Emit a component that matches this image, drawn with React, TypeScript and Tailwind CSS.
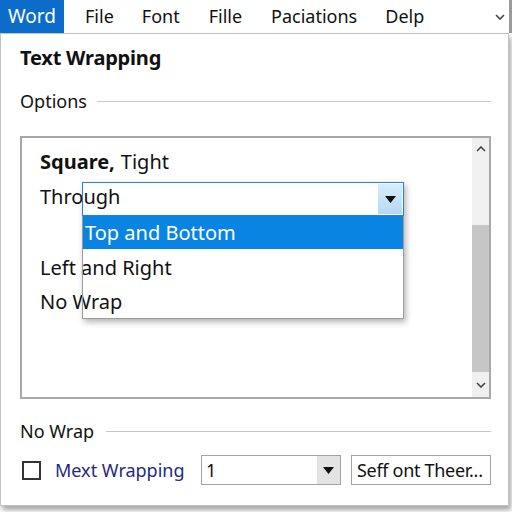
import React from "react";

const font = { fontFamily: "'Noto Sans', 'Open Sans', Arial, sans-serif" };

function Tri({ className = "" }: { className?: string }) {
  return (
    <svg width="11" height="7" viewBox="0 0 11 7" className={className}>
      <path d="M0 0 L11 0 L5.5 7 Z" fill="#111" />
    </svg>
  );
}

function Chevron({ up }: { up?: boolean }) {
  return (
    <svg width="10" height="6" viewBox="0 0 10 6">
      <path d={up ? "M1 5 L5 1 L9 5" : "M1 1 L5 5 L9 1"} stroke="#444" strokeWidth="1.6" fill="none" />
    </svg>
  );
}

export default function App() {
  const menu = [
    { label: "File", ml: "ml-[21px]" },
    { label: "Font", ml: "ml-[28px]" },
    { label: "Fille", ml: "ml-[29px]" },
    { label: "Paciations", ml: "ml-[29px]" },
    { label: "Delp", ml: "ml-[28px]" },
  ];

  return (
    <div className="w-[512px] h-[512px] bg-white overflow-hidden text-[#111]" style={font}>
      {/* menu bar */}
      <div className="flex items-center h-[33px] text-[18px] border-r-[3px] border-[#9a9a9a]">
        <div className="h-full w-[64px] bg-[#0b6dc9] text-white text-[19px] flex items-center justify-center">Word</div>
        {menu.map((m) => (
          <span key={m.label} className={m.ml}>{m.label}</span>
        ))}
        <div className="ml-auto mr-[4px] flex items-center">
          <Chevron />
        </div>
      </div>

      {/* dialog panel */}
      <div className="w-[509px] h-[473px] border border-[#c2c2c2] bg-white shadow-[2px_4px_5px_rgba(0,0,0,0.35)] flex flex-col pl-[19px] pr-[17px]">
        <div className="mt-[11px] h-[26px] flex items-center text-[20px] font-bold tracking-[-0.2px]">Text Wrapping</div>

        <div className="mt-[18px] h-[24px] flex items-center gap-[10px] text-[18px]">
          <span>Options</span>
          <div className="flex-1 h-px bg-[#c8c8c8]" />
        </div>

        {/* listbox */}
        <div className="relative mt-[23px] w-[471px] h-[263px] border-2 border-[#a8a8a8] flex">
          <div className="flex-1 flex flex-col pt-[6px] pl-[18px] text-[20px]">
            <div className="h-[35px] flex items-center">
              <span className="font-bold">Square,</span>
              <span className="ml-[6px]">Tight</span>
            </div>
            <div className="h-[36px] flex items-center">Through</div>
            <div className="h-[35px]" />
            <div className="h-[35px] flex items-center">Left and Right</div>
            <div className="h-[33px] flex items-center">No Wrap</div>
          </div>

          {/* scrollbar */}
          <div className="w-[17px] h-full bg-[#f0f0f0] flex flex-col items-center">
            <div className="h-[22px] flex items-center">
              <Chevron up />
            </div>
            <div className="mt-[65px] w-full h-[147px] bg-[#c6c6c6]" />
            <div className="flex-1 flex items-center">
              <Chevron />
            </div>
          </div>

          {/* dropdown overlay */}
          <div className="absolute left-[60px] top-[44px] w-[322px] h-[137px] flex flex-col border border-[#9c9c9c] shadow-[2px_3px_6px_rgba(0,0,0,0.3)]">
            <div className="h-[34px] flex border border-[#1c86dc] m-[-1px]">
              <div className="flex-1" />
              <div className="w-[24px] my-[1px] mr-[1px] bg-gradient-to-b from-[#d9ecfb] to-[#b6d8f3] flex items-center justify-center">
                <Tri />
              </div>
            </div>
            <div className="h-[33px] mt-px bg-[#0a84e2] text-white text-[20px] flex items-center pl-[2px]">
              Top and Bottom
            </div>
          </div>
        </div>

        <div className="mt-[20px] h-[24px] flex items-center gap-[12px] text-[18px]">
          <span>No Wrap</span>
          <div className="flex-1 h-px bg-[#c8c8c8]" />
        </div>

        {/* bottom row */}
        <div className="mt-[12px] h-[30px] flex items-center text-[18px]">
          <div className="ml-[2px] w-[19px] h-[19px] border-2 border-[#333]" />
          <span className="ml-[14px] text-[#1d2a7f]">Mext Wrapping</span>
          <div className="ml-auto w-[140px] h-[30px] border border-[#a3a3a3] flex">
            <div className="flex-1 pl-[4px] flex items-center">1</div>
            <div className="w-[23px] bg-[#e3e3e3] flex items-center justify-center">
              <Tri />
            </div>
          </div>
          <div className="ml-[10px] w-[140px] h-[30px] border border-[#a3a3a3] flex items-center pl-[5px] whitespace-nowrap overflow-hidden tracking-[-0.3px]">
            Seff ont Theer...
          </div>
        </div>
      </div>
    </div>
  );
}
